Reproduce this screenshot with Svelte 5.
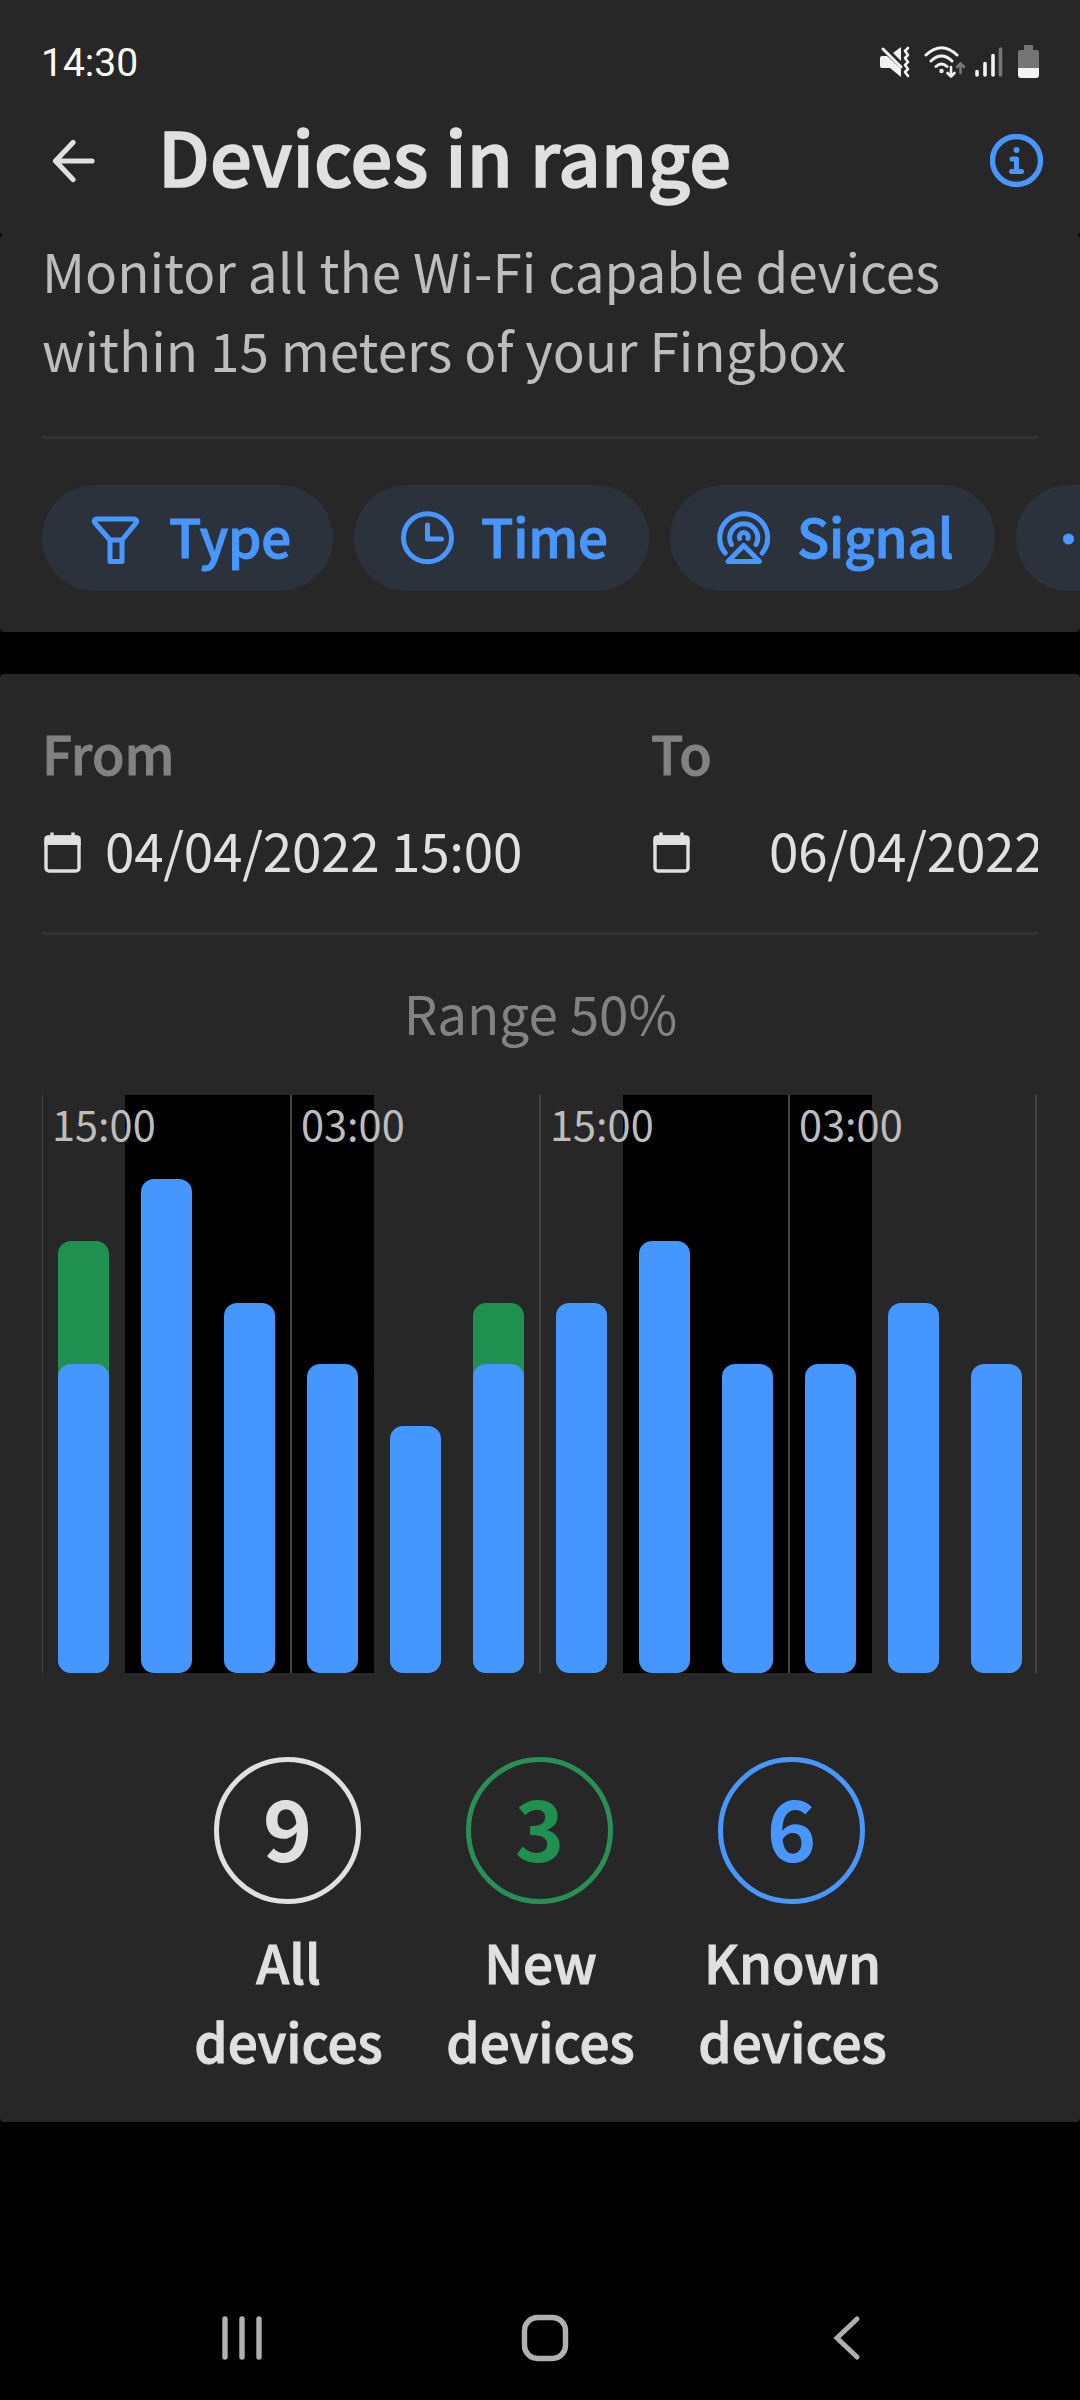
<script>
  const filters = [
    { name: 'Type', icon: 'funnel', size: 'type' },
    { name: 'Time', icon: 'clock', size: 'time' },
    { name: 'Signal', icon: 'signal', size: 'signal' },
    { name: '', icon: 'more', size: 'more' },
  ];

  // one slot covers four hours
  const slots = [
    { known: 5, fresh: 2, label: '15:00' },
    { known: 8, fresh: 0, night: true },
    { known: 6, fresh: 0, night: true },
    { known: 5, fresh: 0, night: true, label: '03:00' },
    { known: 4, fresh: 0 },
    { known: 5, fresh: 1 },
    { known: 6, fresh: 0, label: '15:00' },
    { known: 7, fresh: 0, night: true },
    { known: 5, fresh: 0, night: true },
    { known: 5, fresh: 0, night: true, label: '03:00' },
    { known: 6, fresh: 0 },
    { known: 5, fresh: 0 },
  ];

  const totals = [
    { count: 9, name: 'All', kind: 'all' },
    { count: 3, name: 'New', kind: 'new' },
    { count: 6, name: 'Known', kind: 'known' },
  ];

  const unit = 61.75;
  const barHeight = (n) => (n * unit) + 'px';
</script>

{#snippet calendar()}
  <svg class="calendar" width="37" height="41" viewBox="0 0 37 41">
    <rect x="2" y="5" width="33" height="34" rx="3" fill="none" stroke="#e0e0e0" stroke-width="3.4" />
    <path d="M0.500 13V6Q0.500 3.500 3.500 3.500H33.500Q36.500 3.500 36.500 6V13Z" fill="#e0e0e0" />
    <path d="M8 0.500V6M29 0.500V6" stroke="#e0e0e0" stroke-width="3.400" />
  </svg>
{/snippet}

<div class="screen">
  <header>
    <div class="status">
      <div class="clock">14:30</div>
      <svg class="mute" width="32" height="34" viewBox="0 0 32 34">
        <path d="M2 11H7L21 24V32L10 23H2Q0 23 0 21V13Q0 11 2 11Z" fill="#f2f2f2" />
        <path d="M13 8L21 2V16Z" fill="#f2f2f2" />
        <path d="M3 4L21 22" stroke="#f2f2f2" stroke-width="3" stroke-linecap="round" />
        <path d="M28 3L25 6L28 10L25 13L28 17L25 20L28 24L25 27L28 31" fill="none" stroke="#f2f2f2" stroke-width="2.6" stroke-linecap="round" stroke-linejoin="round" />
      </svg>
      <svg class="wifi" width="43" height="34" viewBox="0 0 43 34">
        <g fill="none" stroke="#f2f2f2" stroke-width="3" stroke-linecap="round" stroke-linejoin="round">
          <path d="M2 10Q17.500 -4.500 33 10M7 16Q17.500 6 28 16M12 21.500Q17.500 16.500 23 21.500" />
          <path d="M27 22V31M23.500 28L27 31.500L30.500 28" stroke-width="2.6" />
          <path d="M36.500 28V19M33 22L36.500 18.500L40 22" stroke="#777" stroke-width="2.6" />
        </g>
        <circle cx="17.500" cy="26" r="2.200" fill="#f2f2f2" />
      </svg>
      <svg class="bars" width="28" height="34" viewBox="0 0 28 34">
        <g stroke="#f2f2f2" stroke-width="3.600" stroke-linecap="round">
          <path d="M2 26.500V30M10 18.500V30M18 10.500V30" />
          <path d="M25.500 4V30" stroke="#777" />
        </g>
      </svg>
      <svg class="battery" width="21" height="34" viewBox="0 0 21 34">
        <path d="M6 0H15V5H19Q21 5 21 7V23H0V7Q0 5 2 5H6Z" fill="#757575" />
        <path d="M0 23H21V30Q21 33 18 33H3Q0 33 0 30Z" fill="#f2f2f2" />
      </svg>
    </div>
    <div class="topbar">
      <svg class="back" width="44" height="44" viewBox="0 0 44 44">
        <path d="M40 22H4M21 3.500L3.500 22L21 40.500" fill="none" stroke="#e0e0e0" stroke-width="5.200" stroke-linecap="round" stroke-linejoin="round" />
      </svg>
      <h1>Devices in range</h1>
      <svg class="info" width="54" height="54" viewBox="0 0 54 54">
        <circle cx="26.500" cy="26.500" r="24" fill="none" stroke="#4896ff" stroke-width="5.400" />
        <circle cx="26.500" cy="16" r="3" fill="#4896ff" />
        <path d="M22 25H26.500V37.500M21.500 37.500H31.500" fill="none" stroke="#4896ff" stroke-width="5" stroke-linecap="round" stroke-linejoin="round" />
      </svg>
    </div>
  </header>

  <section class="card intro">
    <p>Monitor all the Wi-Fi capable devices<br />within 15 meters of your Fingbox</p>
    <div class="divider"></div>
    <div class="filters">
      {#each filters as filter}
        <div class="chip {filter.size}">
          <svg width="54" height="54" viewBox="0 0 54 54" fill="none" stroke="#4896ff" stroke-width="5" stroke-linecap="round" stroke-linejoin="round">
            {#if filter.icon == 'funnel'}
              <path d="M7 8H45Q49 9 47 12L33 29H21L6 12Q4 9 7 8ZM21 29V50.500H33V29" />
            {:else if filter.icon == 'clock'}
              <circle cx="26.500" cy="26.800" r="24" />
              <path d="M26.500 14V28H40.500" />
            {:else if filter.icon == 'signal'}
              <path d="M8.200 42A24 24 0 1 1 45.200 42" />
              <path d="M14.500 33.500A14 14 0 1 1 39 33.500" />
              <path d="M22.500 27.500A4.500 4.500 0 1 1 31 27.500" />
              <path d="M26.700 34.500L42.500 50.500H11Z" />
            {:else}
              <g fill="#4896ff" stroke="none">
                <circle cx="5.500" cy="28" r="5.600" />
                <circle cx="27" cy="28" r="5.600" />
                <circle cx="48" cy="28" r="5.600" />
              </g>
            {/if}
          </svg>
          {#if filter.name}<span>{filter.name}</span>{/if}
        </div>
      {/each}
    </div>
  </section>

  <section class="card report">
    <div class="dates">
      <div class="date from">
        <div class="caption">From</div>
        <div class="value">{@render calendar()}<span>04/04/2022 15:00</span></div>
      </div>
      <div class="date to">
        <div class="caption">To</div>
        <div class="value">{@render calendar()}<span>06/04/2022</span></div>
      </div>
    </div>
    <div class="divider"></div>
    <div class="range">Range 50%</div>

    <div class="chart">
      {#each slots as slot}
        <div class="slot" class:night={slot.night} class:tick={slot.label}>
          {#if slot.label}<div class="hour">{slot.label}</div>{/if}
          <div class="bar" class:fresh={slot.fresh} style="height: {barHeight(slot.known + slot.fresh)}">
            <div class="known-bar" style="height: {barHeight(slot.known)}"></div>
          </div>
        </div>
      {/each}
    </div>

    <div class="totals">
      {#each totals as total}
        <div class="total {total.kind}">
          <div class="ring"><span>{total.count}</span></div>
          <div class="name">{total.name}<br />devices</div>
        </div>
      {/each}
    </div>
  </section>

  <nav>
    <svg width="44" height="50" viewBox="0 0 44 50">
      <path d="M5 6V44M22 6V44M39 6V44" stroke="#b0b0b0" stroke-width="5.400" stroke-linecap="round" />
    </svg>
    <svg class="home" width="50" height="50" viewBox="0 0 50 50">
      <rect x="4.500" y="4.500" width="41" height="41" rx="13" fill="none" stroke="#b0b0b0" stroke-width="5.400" />
    </svg>
    <svg width="32" height="50" viewBox="0 0 32 50">
      <path d="M26 6L6 25L26 44" fill="none" stroke="#b0b0b0" stroke-width="5" stroke-linecap="round" />
    </svg>
  </nav>
</div>

<style>
  :global(body) {
    background: #000;
  }
  .screen {
    display: flex;
    flex-direction: column;
    width: 1080px;
    height: 2400px;
    overflow: hidden;
    background: #000;
    color: #e0e0e0;
    font-family: 'Noto Sans CJK JP', 'Noto Sans', sans-serif;
    font-size: 53px;
    line-height: 79px;
  }
  svg {
    display: block;
    flex: none;
  }
  header {
    height: 235px;
    background: #272727;
    border-radius: 0 0 4px 4px;
  }
  .status {
    display: flex;
    align-items: center;
    height: 40px;
    padding: 42px 41px 0 41px;
  }
  .clock {
    flex-grow: 1;
    color: #fff;
    font-family: Roboto, sans-serif;
    font-size: 39px;
    line-height: 40px;
    padding-top: 1px;
  }
  .wifi {
    margin-left: 12px;
  }
  .bars {
    margin-left: 8px;
  }
  .battery {
    margin-left: 15px;
  }
  .topbar {
    display: flex;
    align-items: center;
    height: 149px;
    padding: 4px 36px 0 52px;
  }
  h1 {
    flex-grow: 1;
    margin: 0 0 0 62px;
    padding-bottom: 11px;
    font-size: 74px;
    font-weight: 500;
    letter-spacing: 0.2px;
    line-height: 100px;
    white-space: nowrap;
    -webkit-text-stroke: 1.5px currentColor;
  }
  .card {
    display: flow-root;
    box-sizing: border-box;
    border-radius: 4px;
    background: #272727;
  }
  .intro {
    height: 397px;
  }
  p {
    height: 158px;
    margin: -4px 0 0 0;
    padding: 0 0 47px 42px;
    color: #bdbdbd;
    white-space: nowrap;
  }
  .divider {
    height: 3px;
    margin: 0 42px;
    background: #333;
  }
  .filters {
    display: flex;
    gap: 21px;
    margin-top: 46px;
    padding-left: 42px;
  }
  .chip {
    display: flex;
    flex: none;
    align-items: center;
    box-sizing: border-box;
    height: 106px;
    padding-left: 47px;
    border-radius: 53px;
    background: #2b323b;
    color: #4896ff;
    font-weight: 500;
    letter-spacing: -0.2px;
    -webkit-text-stroke: 1px currentColor;
  }
  .chip span {
    margin: -6px 0 0 26px;
  }
  .chip.type {
    width: 291px;
  }
  .chip.time {
    width: 295px;
  }
  .chip.signal {
    width: 325px;
  }
  .chip.more {
    width: 148px;
  }
  .report {
    height: 1448px;
    margin-top: 42px;
    padding-top: 39px;
  }
  .dates {
    display: flex;
    height: 219px;
    padding: 0 42px;
  }
  .from {
    width: 609px;
    flex: none;
  }
  .to {
    flex-grow: 1;
    overflow: hidden;
  }
  .caption {
    color: #828282;
    font-weight: 500;
    -webkit-text-stroke: 1px currentColor;
  }
  .value {
    display: flex;
    align-items: center;
    margin-top: 18px;
    letter-spacing: -0.25px;
    white-space: nowrap;
  }
  .calendar {
    margin: 5px 0 0 2px;
  }
  .value span {
    margin-left: 24px;
  }
  .to .value span {
    margin-left: 79px;
  }
  .range {
    margin-top: 38px;
    padding-left: 1px;
    color: #828282;
    text-align: center;
  }
  .chart {
    display: grid;
    grid-template-columns: repeat(12, 83px);
    width: 995px;
    height: 578px;
    margin: 43px 0 0 42px;
    box-sizing: border-box;
    border-right: 2px solid #444;
  }
  .slot {
    position: relative;
    display: flex;
    align-items: flex-end;
    padding-left: 16px;
  }
  .night {
    background: #000;
  }
  .tick {
    box-shadow: -1px 0 #444, inset 1px 0 #444;
  }
  .tick:first-child {
    box-shadow: inset 1px 0 #444;
  }
  .hour {
    position: absolute;
    z-index: 1;
    top: -2px;
    left: 10px;
    color: #bdbdbd;
    font-size: 41.5px;
    line-height: 60px;
  }
  .bar {
    display: flex;
    align-items: flex-end;
    width: 51px;
    border-radius: 13px;
  }
  .fresh {
    background: #209050;
  }
  .known-bar {
    width: 51px;
    border-radius: 13px;
    background: #4596ff;
  }
  .totals {
    display: flex;
    justify-content: center;
    margin-top: 84px;
    padding-right: 1px;
  }
  .total {
    width: 252px;
    text-align: center;
  }
  .ring {
    display: flex;
    align-items: center;
    justify-content: center;
    box-sizing: border-box;
    width: 147px;
    height: 147px;
    margin: 0 auto;
    border: 5px solid #e0e0e0;
    border-radius: 50%;
    font-size: 84px;
    font-weight: 700;
  }
  .ring span {
    margin-top: -10px;
  }
  .name {
    margin-top: 18px;
    padding-left: 2px;
    font-weight: 500;
    letter-spacing: -0.1px;
    -webkit-text-stroke: 1px currentColor;
  }
  .new .ring {
    border-color: #2a8f57;
    color: #209050;
  }
  .known .ring {
    border-color: #4896ff;
    color: #4896ff;
  }
  nav {
    display: flex;
    align-items: center;
    justify-content: space-between;
    height: 50px;
    margin-top: auto;
    padding: 0 217px 37px 220px;
  }
  .home {
    margin-right: 6px;
  }
</style>
